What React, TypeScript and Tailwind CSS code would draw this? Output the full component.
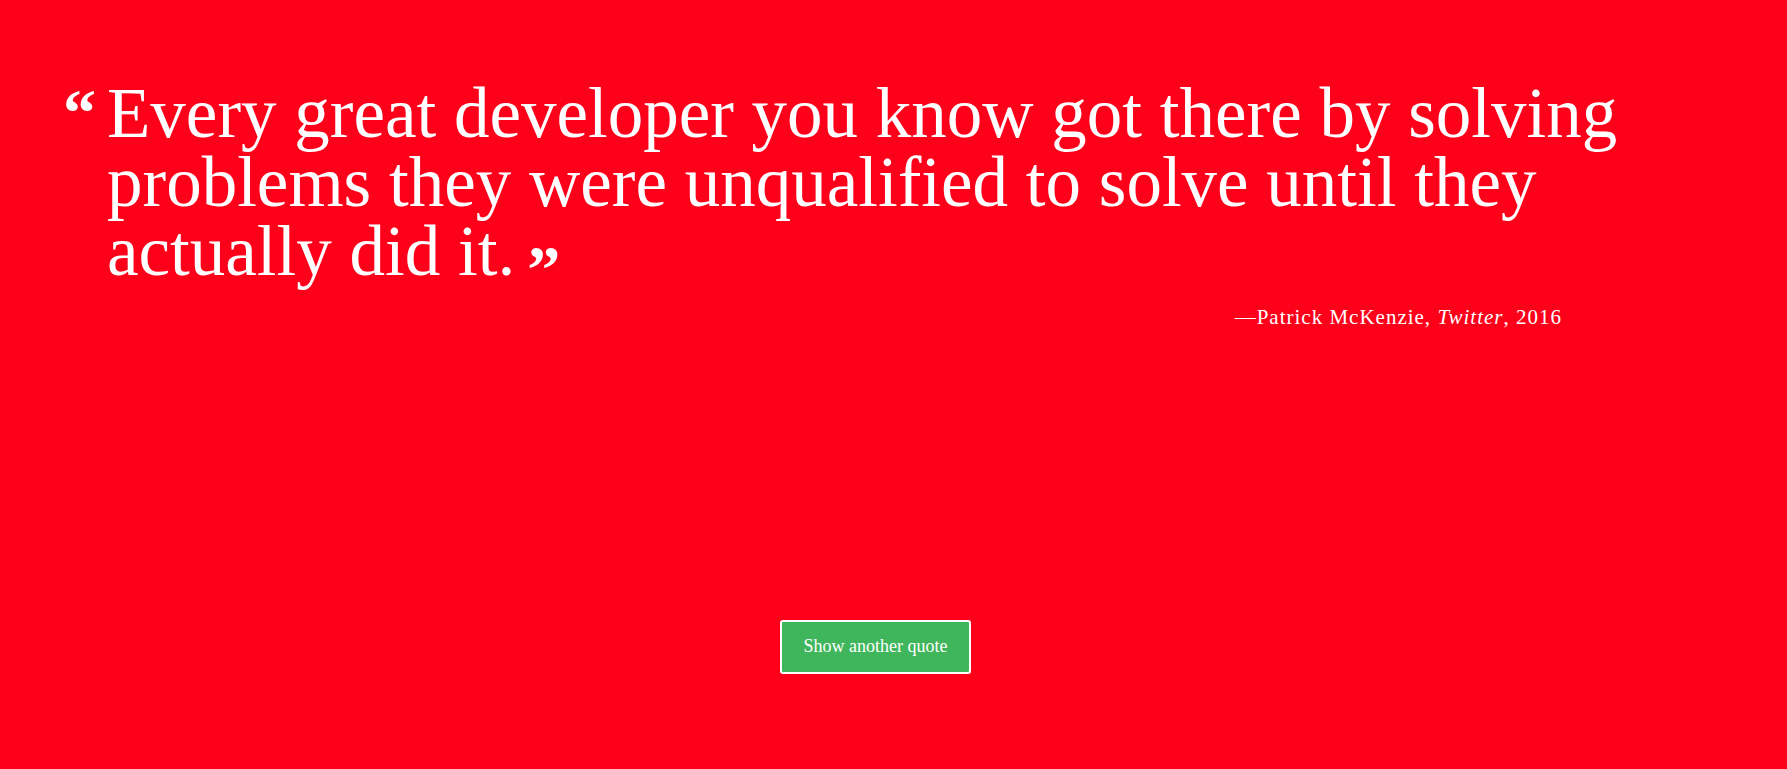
import React from "react";

const serif = "font-['Liberation_Serif','Times_New_Roman',serif]";

export default function App() {
  return (
    <div className={`min-h-[769px] w-full bg-[#fd001a] text-white ${serif}`}>
      <div className="flex flex-col pl-[63px] pr-[225px] pt-[79px]">
        <blockquote className="flex">
          <span className="w-[44px] shrink-0 pt-[9px] text-[66px] font-bold leading-[50px]">
            &ldquo;
          </span>
          <p className="whitespace-nowrap text-[71px] leading-[69px]">
            Every great developer you know got there by solving
            <br />
            problems they were unqualified to solve until they
            <br />
            actually did it.
            <span className="ml-[12px] align-[-16px] text-[66px] font-bold leading-none">
              &rdquo;
            </span>
          </p>
        </blockquote>
        <p className="mt-0 self-end text-[21px] tracking-[1px]">
          —Patrick McKenzie, <i>Twitter</i>, 2016
        </p>
      </div>
      <div className="mt-[286px] flex pl-[780px]">
        <button className="h-[54px] w-[191px] rounded-[3px] border-2 border-white bg-[#3fb65c] text-[18px] text-white">
          Show another quote
        </button>
      </div>
    </div>
  );
}
